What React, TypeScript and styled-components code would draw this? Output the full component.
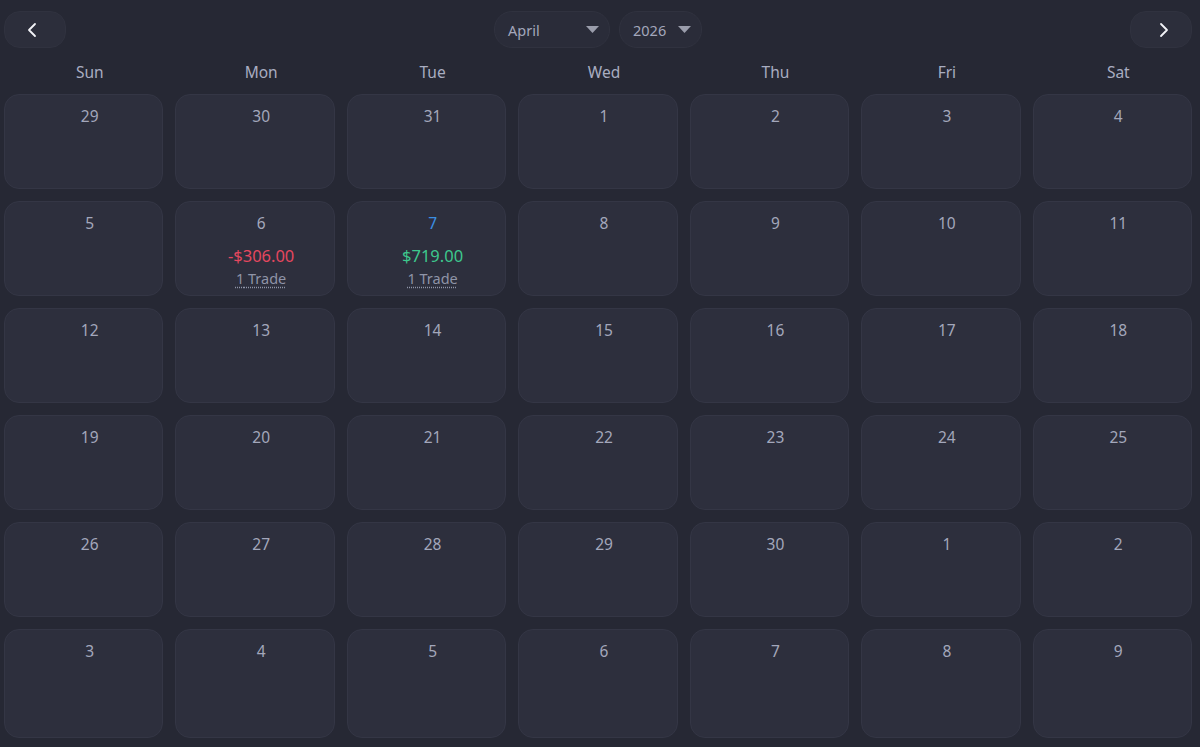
import React from 'react';
import styled, { createGlobalStyle } from 'styled-components';

type Day = {
  label: number;
  muted?: boolean;
  today?: boolean;
  pnl?: number;
  trades?: number;
};

const weekDays = ['Sun', 'Mon', 'Tue', 'Wed', 'Thu', 'Fri', 'Sat'];

const buildDays = (): Day[] => {
  const days: Day[] = [];
  [29, 30, 31].forEach((d) => days.push({ label: d, muted: true }));
  for (let d = 1; d <= 30; d++) days.push({ label: d });
  for (let d = 1; d <= 9; d++) days.push({ label: d, muted: true });
  days[8] = { ...days[8], pnl: -306, trades: 1 };
  days[9] = { ...days[9], pnl: 719, trades: 1, today: true };
  return days;
};

const money = (v: number) =>
  (v < 0 ? '-$' : '$') + Math.abs(v).toFixed(2);

const App = () => {
  const days = buildDays();
  return (
    <>
      <GlobalStyle />
      <Page>
        <Toolbar>
          <NavButton aria-label="Previous month" shift={-3}>
            <Chevron dir="left" />
          </NavButton>
          <Pickers>
            <Select width={116}>
              April
              <Caret />
            </Select>
            <Select width={83}>
              2026
              <Caret />
            </Select>
          </Pickers>
          <NavButton aria-label="Next month" shift={3}>
            <Chevron dir="right" />
          </NavButton>
        </Toolbar>
        <WeekRow>
          {weekDays.map((w) => (
            <WeekDay key={w}>{w}</WeekDay>
          ))}
        </WeekRow>
        <Grid>
          {days.map((d, i) => (
            <Cell key={i}>
              <DayNum today={d.today}>{d.label}</DayNum>
              {d.pnl !== undefined && (
                <>
                  <Pnl negative={d.pnl < 0}>{money(d.pnl)}</Pnl>
                  <Trades>
                    {d.trades} Trade{d.trades === 1 ? '' : 's'}
                  </Trades>
                </>
              )}
            </Cell>
          ))}
        </Grid>
      </Page>
    </>
  );
};

const Chevron = ({ dir }: { dir: 'left' | 'right' }) => (
  <svg width="14" height="16" viewBox="0 0 14 16" fill="none">
    <path
      d={dir === 'left' ? 'M10 2 L4 8 L10 14' : 'M4 2 L10 8 L4 14'}
      stroke="#f2f3f7"
      strokeWidth="1.8"
      strokeLinecap="round"
      strokeLinejoin="round"
    />
  </svg>
);

const Caret = () => (
  <svg width="13" height="7" viewBox="0 0 13 7">
    <path d="M0 0 L13 0 L6.5 7 Z" fill="#9a9dab" />
  </svg>
);

// Styled Components
const GlobalStyle = createGlobalStyle`
  html, body {
    margin: 0;
    padding: 0;
    background: #262834;
  }
  body {
    font-family: "Noto Sans", "Open Sans", sans-serif;
    color: #a3a7bb;
  }
`;

const Page = styled.div`
  padding: 11px 8px 0 4px;
  height: 747px;
  box-sizing: border-box;
  overflow: hidden;
  background: #262834;
`;

const Toolbar = styled.div`
  display: flex;
  align-items: center;
  justify-content: space-between;
  height: 37px;
`;

const NavButton = styled.button<{ shift: number }>`
  display: flex;
  align-items: center;
  justify-content: center;
  width: 62px;
  height: 37px;
  padding: 0;
  padding-left: ${(p) => (p.shift > 0 ? p.shift * 2 : 0)}px;
  padding-right: ${(p) => (p.shift < 0 ? -p.shift * 2 : 0)}px;
  border-radius: 16px;
  border: 1px solid #30323f;
  background: #2c2e3b;
  cursor: pointer;
`;

const Pickers = styled.div`
  display: flex;
  gap: 9px;
`;

const Select = styled.div<{ width: number }>`
  display: flex;
  align-items: center;
  justify-content: space-between;
  box-sizing: border-box;
  width: ${(p) => p.width}px;
  height: 37px;
  padding: 0 10px 0 13px;
  border-radius: 18px;
  border: 1px solid #30323f;
  background: #2a2c39;
  color: #a3a7bb;
  font-size: 14.5px;
`;

const WeekRow = styled.div`
  display: grid;
  grid-template-columns: repeat(7, 1fr);
  column-gap: 12px;
  margin-top: 12px;
  height: 24px;
`;

const WeekDay = styled.div`
  padding-left: 12px;
  text-align: center;
  font-size: 15.5px;
  line-height: 24px;
  color: #a9adc1;
`;

const Grid = styled.div`
  display: grid;
  grid-template-columns: repeat(7, 1fr);
  grid-template-rows: repeat(5, 95px) 109px;
  gap: 12px;
  margin-top: 10px;
`;

const Cell = styled.div`
  display: flex;
  flex-direction: column;
  align-items: center;
  box-sizing: border-box;
  padding: 10px 0 0 12px;
  border-radius: 15px;
  border: 1px solid #343645;
  background: #2d2f3d;
`;

const DayNum = styled.div<{ today?: boolean }>`
  font-size: 15.5px;
  line-height: 22px;
  color: ${(p) => (p.today ? '#3b8ee2' : '#a3a7bb')};
`;

const Pnl = styled.div<{ negative: boolean }>`
  margin-top: 11px;
  font-size: 16.5px;
  line-height: 22px;
  color: ${(p) => (p.negative ? '#e5475f' : '#3dc88d')};
`;

const Trades = styled.div`
  margin-top: 1px;
  font-size: 14.5px;
  line-height: 20px;
  color: #8f94a7;
  text-decoration: underline dotted #8f94a7;
  text-underline-offset: 3px;
`;

export default App;
